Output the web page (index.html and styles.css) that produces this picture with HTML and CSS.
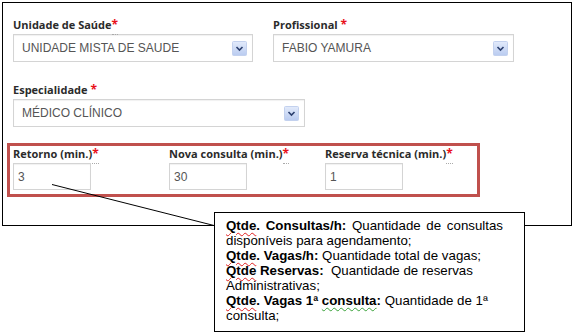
FILE: index.html
```html
<!DOCTYPE html>
<html lang="pt-BR">
<head>
	<meta charset="UTF-8" />
	<meta name="viewport" content="width=device-width, initial-scale=1.0" />
	<title>Agenda</title>
	<link rel="stylesheet" href="styles.css">
</head>
<body>
    <div class="frame">
        <div class="row">
            <div class="field unit">
                <label class="lbl">Unidade de Saúde<abbr class="req dotted">*</abbr></label>
                <div class="select">
                    <span>UNIDADE MISTA DE SAUDE</span>
                    <svg class="arrow" width="15" height="15" viewBox="0 0 15 15">
                        <defs>
                            <linearGradient id="g1" x1="0" y1="0" x2="0" y2="1">
                                <stop offset="0" stop-color="#e3ebfb" />
                                <stop offset="1" stop-color="#b9cbf0" />
                            </linearGradient>
                        </defs>
                        <rect x="0.5" y="0.5" width="14" height="14" rx="1" fill="url(#g1)" stroke="#c3d1ee" />
                        <polyline points="4.5,6 7.5,9 10.5,6" fill="none" stroke="#2b3f6e" stroke-width="1.6" />
                    </svg>
                </div>
            </div>
            <div class="field prof">
                <label class="lbl">Profissional <span class="req">*</span></label>
                <div class="select">
                    <span>FABIO YAMURA</span>
                    <svg class="arrow" width="15" height="15" viewBox="0 0 15 15">
                        <rect x="0.5" y="0.5" width="14" height="14" rx="1" fill="url(#g1)" stroke="#c3d1ee" />
                        <polyline points="4.5,6 7.5,9 10.5,6" fill="none" stroke="#2b3f6e" stroke-width="1.6" />
                    </svg>
                </div>
            </div>
        </div>
        <div class="row last">
            <div class="field spec">
                <label class="lbl">Especialidade <span class="req">*</span></label>
                <div class="select">
                    <span>MÉDICO CLÍNICO</span>
                    <svg class="arrow" width="15" height="15" viewBox="0 0 15 15">
                        <rect x="0.5" y="0.5" width="14" height="14" rx="1" fill="url(#g1)" stroke="#c3d1ee" />
                        <polyline points="4.5,6 7.5,9 10.5,6" fill="none" stroke="#2b3f6e" stroke-width="1.6" />
                    </svg>
                </div>
            </div>
        </div>
        <div class="times">
            <div class="field">
                <label class="lbl">Retorno (min.)<abbr class="req dotted">*</abbr></label>
                <div class="input">3</div>
            </div>
            <div class="field">
                <label class="lbl">Nova consulta (min.)<abbr class="req dotted">*</abbr></label>
                <div class="input">30</div>
            </div>
            <div class="field">
                <label class="lbl">Reserva técnica (min.)<abbr class="req dotted">*</abbr></label>
                <div class="input">1</div>
            </div>
        </div>
    </div>

    <svg class="pointer" width="575" height="336">
        <line x1="52" y1="184.5" x2="214" y2="225.5" stroke="#000" stroke-width="1" />
    </svg>

    <div class="note">
        <div class="wide"><b><span class="sp">Qtde</span>. Consultas/h:</b> Quantidade de consultas</div>
        <div>disponíveis para agendamento;</div>
        <div><b><span class="sp">Qtde</span>. Vagas/h:</b> Quantidade total de vagas;</div>
        <div><b><span class="sp">Qtde</span> Reservas:</b>&nbsp; Quantidade de reservas</div>
        <div>Administrativas;</div>
        <div><b><span class="sp">Qtde</span>. Vagas 1ª <span class="gr">consulta</span>:</b> Quantidade de 1ª</div>
        <div>consulta;</div>
    </div>
</body>
</html>
```

FILE: styles.css
```css
body {
    margin: 0;
    background-color: #fff;
    font-family: "Open Sans", sans-serif;
}

.frame {
    box-sizing: border-box;
    width: 570px;
    height: 224px;
    margin: 2px 0 0 2px;
    border: 1px solid #000;
    padding: 14px 10px 0;
}

.row {
    display: flex;
    gap: 20px;
    margin-bottom: 20px;
}

.row.last {
    margin-bottom: 16px;
}

.unit {
    width: 240px;
}

.prof {
    width: 241px;
}

.spec {
    width: 292px;
}

.lbl {
    display: block;
    font-size: 11px;
    font-weight: 700;
    line-height: 16px;
    margin-bottom: 1px;
    color: #2b2b2b;
    white-space: nowrap;
}

.req {
    color: #e8101a;
    font-size: 12px;
    text-decoration: none;
}

.req.dotted {
    border-bottom: 1px dotted #aaa;
    padding-bottom: 1px;
}

.select {
    box-sizing: border-box;
    height: 28px;
    display: flex;
    align-items: center;
    justify-content: space-between;
    padding: 0 5px 0 8px;
    border: 1px solid #d4d4d4;
    box-shadow: inset 0 1px 1px rgba(0, 0, 0, 0.06);
    font-family: "Liberation Sans", Arial, sans-serif;
    font-size: 12px;
    color: #555;
}

.arrow {
    display: block;
}

.times {
    box-sizing: border-box;
    width: 473px;
    margin-left: -6px;
    border: 3px solid #c0504d;
    padding: 0 3px 4px;
    display: grid;
    grid-template-columns: repeat(3, 156px);
}

.input {
    box-sizing: border-box;
    width: 78px;
    height: 27px;
    display: flex;
    align-items: center;
    padding-left: 4px;
    border: 1px solid #d4d4d4;
    box-shadow: inset 0 1px 1px rgba(0, 0, 0, 0.06);
    font-family: "Liberation Sans", Arial, sans-serif;
    font-size: 12px;
    color: #555;
}

.pointer {
    position: absolute;
    left: 0;
    top: 0;
    pointer-events: none;
}

.note {
    position: absolute;
    left: 214px;
    top: 212px;
    box-sizing: border-box;
    width: 311px;
    height: 120px;
    padding: 5px 0 0 11px;
    border: 1px solid #000;
    background-color: #fff;
    font-family: "Liberation Sans", Arial, sans-serif;
    font-size: 13.3px;
    line-height: 15px;
    color: #000;
    white-space: nowrap;
}

.sp {
    text-decoration: underline wavy #e02020;
    text-decoration-thickness: 1px;
    text-underline-offset: 2px;
}

.gr {
    text-decoration: underline wavy #3aa23a;
    text-decoration-thickness: 1px;
    text-underline-offset: 2px;
}

.wide {
    word-spacing: 2px;
}
```
